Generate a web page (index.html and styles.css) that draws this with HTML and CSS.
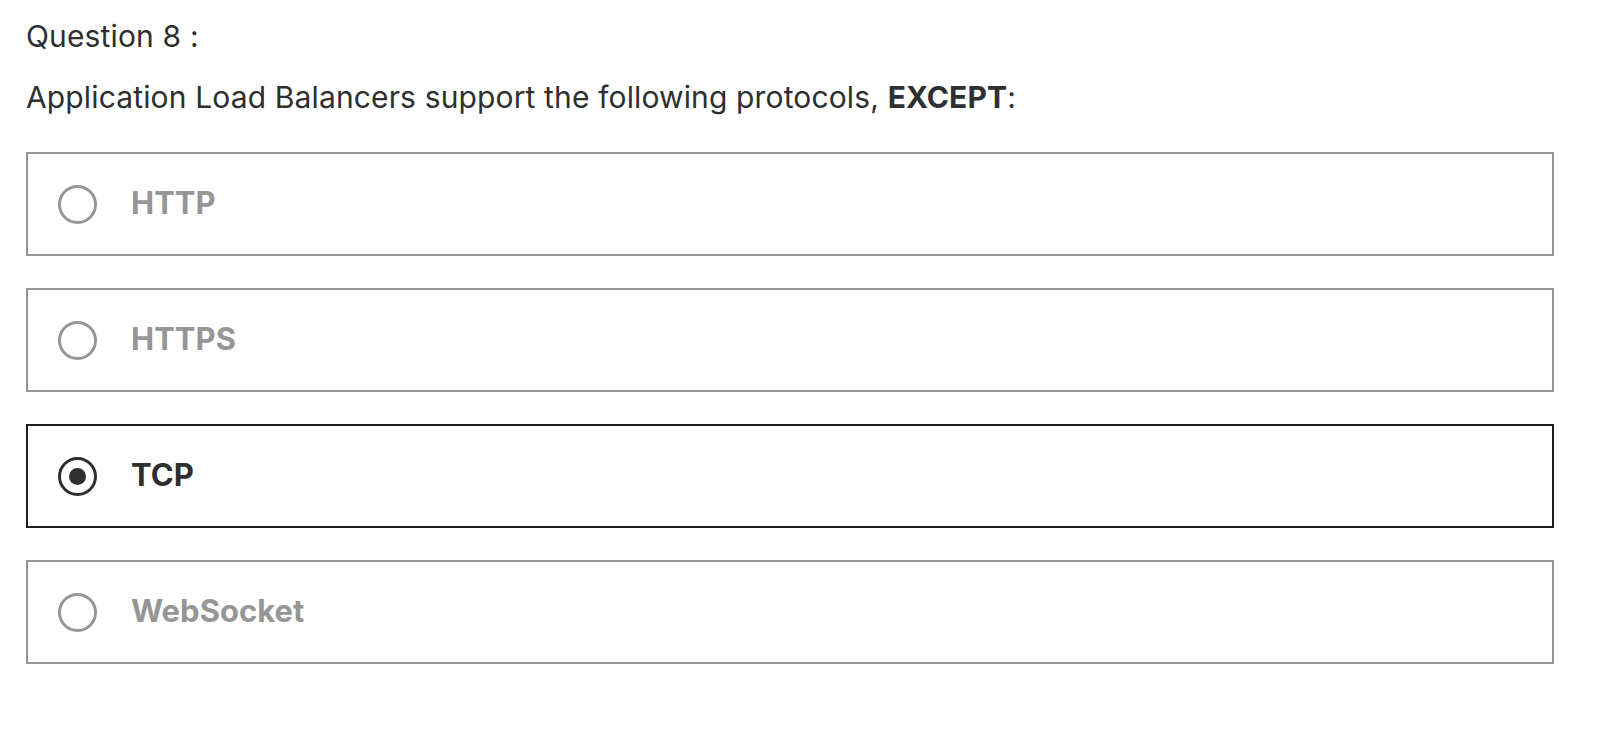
FILE: index.html
```html
<!DOCTYPE html>
<html lang="en">
<head>
<meta charset="utf-8">
<title>Question 8</title>
<link rel="stylesheet" href="styles.css">
</head>
<body>
<div class="quiz">
  <div class="q-label">Question 8 :</div>
  <div class="q-text">Application Load Balancers support the following protocols, <strong>EXCEPT</strong>:</div>
  <div class="options">
    <label class="option">
      <span class="radio"></span>
      <span class="opt-text">HTTP</span>
    </label>
    <label class="option">
      <span class="radio"></span>
      <span class="opt-text">HTTPS</span>
    </label>
    <label class="option selected">
      <span class="radio"></span>
      <span class="opt-text">TCP</span>
    </label>
    <label class="option">
      <span class="radio"></span>
      <span class="opt-text">WebSocket</span>
    </label>
  </div>
</div>
</body>
</html>
```

FILE: styles.css
```css
html, body {
  margin: 0;
  padding: 0;
  background: #ffffff;
}
body {
  font-family: Inter, Roboto, "Liberation Sans", Arial, sans-serif;
  color: #2d2f31;
}
.quiz {
  padding: 16px 0 0 26px;
  width: 1528px;
}
.q-label {
  font-size: 30px;
  line-height: 40px;
  margin-bottom: 21px;
  letter-spacing: 0.15px;
}
.q-text {
  font-size: 30px;
  line-height: 40px;
  margin-bottom: 35px;
  letter-spacing: 0.14px;
}
.q-text strong {
  font-weight: 700;
}
.options {
  display: flex;
  flex-direction: column;
  gap: 32px;
}
.option {
  box-sizing: border-box;
  height: 104px;
  border: 2px solid #969696;
  display: flex;
  align-items: center;
  padding-left: 30px;
  gap: 34px;
}
.option.selected {
  border-color: #1c1d1f;
}
.radio {
  box-sizing: border-box;
  width: 39px;
  height: 39px;
  border: 3px solid #969696;
  border-radius: 50%;
  display: flex;
  align-items: center;
  justify-content: center;
  flex: none;
}
.option.selected .radio {
  border-color: #2d2f31;
}
.option.selected .radio::after {
  content: "";
  width: 17px;
  height: 17px;
  border-radius: 50%;
  background: #2d2f31;
}
.opt-text {
  font-size: 31px;
  font-weight: 700;
  color: #969696;
  padding-bottom: 4px;
}
.option.selected .opt-text {
  color: #2d2f31;
}
```
